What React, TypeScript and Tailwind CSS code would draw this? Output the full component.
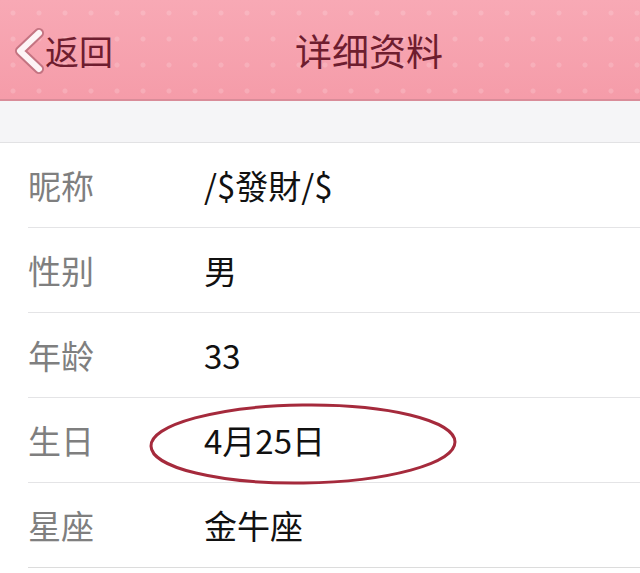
import React from "react";

const rows: { label: string; value: string; circled?: boolean }[] = [
  { label: "昵称", value: "/$發財/$" },
  { label: "性别", value: "男" },
  { label: "年龄", value: "33" },
  { label: "生日", value: "4月25日", circled: true },
  { label: "星座", value: "金牛座" },
];

export default function App() {
  return (
    <div
      className="w-[640px] h-[573px] overflow-hidden bg-white"
      style={{ fontFamily: '"Noto Sans CJK SC", "Noto Sans", sans-serif' }}
    >
      <div className="relative h-[101px] bg-[#f5a0ad] bg-[radial-gradient(circle,rgba(255,255,255,0.16)_2px,transparent_3px),linear-gradient(#f8a9b5,#f59ca9)] bg-[length:26px_26px,100%_100%] border-b-2 border-[#d98c99] flex items-center">
        <div className="flex items-center pl-[13px] pt-[2px]">
          <svg width="32" height="46" viewBox="0 0 32 46">
            <path d="M26 5 L7 23 L26 41" fill="none" stroke="#c47482" strokeWidth="10" strokeLinecap="round" strokeLinejoin="round" />
            <path d="M26 5 L7 23 L26 41" fill="none" stroke="#fdf4f6" strokeWidth="6" strokeLinecap="round" strokeLinejoin="round" />
          </svg>
          <span className="text-[34px] leading-none text-[#6e1d2f] ml-[0px]">返回</span>
        </div>
        <div className="absolute left-[295px] top-0 h-full flex items-center pt-[2px]">
          <span className="text-[37px] leading-none text-[#6e1d2f]">详细资料</span>
        </div>
      </div>
      <div className="h-[42px] bg-[#f5f5f7] border-b border-[#e2e2e4]" />
      <div className="flex flex-col">
        {rows.map((r, i) => (
          <div key={r.label} className="relative pl-[28px]">
            <div className={`h-[85px] flex items-center border-b ${i < rows.length - 1 ? "border-[#e4e4e6]" : "border-[#dcdcdc]"}`}>
              <span className="w-[176px] text-[33px] leading-none text-[#7f7f7f]">{r.label}</span>
              <span className="text-[33px] leading-none text-[#111]">{r.value}</span>
            </div>
            {r.circled && (
              <svg className="absolute left-[148px] top-[3px]" width="312" height="86" viewBox="0 0 312 86">
                <ellipse cx="155" cy="43" rx="152" ry="39" fill="none" stroke="#a52a3c" strokeWidth="3" transform="rotate(-0.8 155 43)" />
              </svg>
            )}
          </div>
        ))}
      </div>
    </div>
  );
}
